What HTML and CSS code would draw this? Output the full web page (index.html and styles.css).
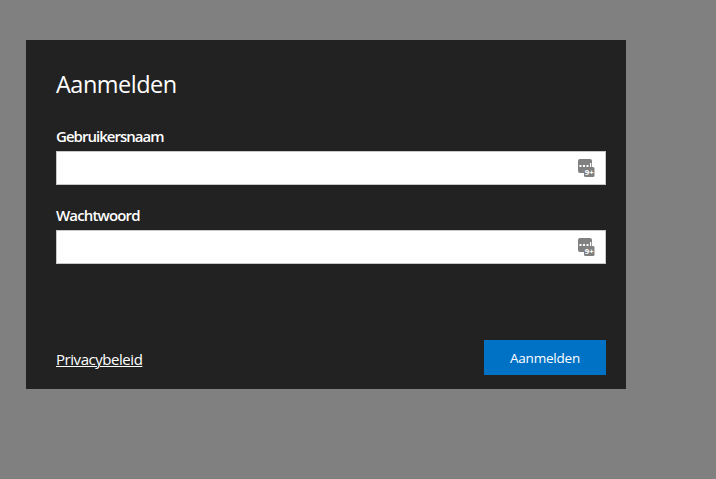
FILE: index.html
```html
<!DOCTYPE html>
<html lang="nl">
<head>
<meta charset="utf-8">
<title>Aanmelden</title>
<link rel="stylesheet" href="styles.css">
</head>
<body>
<main class="card">
  <h1 class="title">Aanmelden</h1>
  <form>
    <label class="label label-user" for="user">Gebruikersnaam</label>
    <div class="field"><input id="user" type="text">
      <svg class="icon" viewBox="0 0 17 19">
        <path fill="#808080" d="M2 0h10q2 0 2 2v12H2q-2 0-2-2V2q0-2 2-2z"/>
        <rect x="6" y="8" width="10.500" height="10" rx="1.500" fill="#808080"/>
        <path fill="#fff" d="M1.500 6h2v2h-2zM5 6h2v2H5zM8.500 6h2v2h-2zM12 4h1.200v4H12z"/>
        <text x="6.700" y="15.500" class="count">9+</text>
      </svg>
    </div>
    <label class="label label-pass" for="pass">Wachtwoord</label>
    <div class="field"><input id="pass" type="password">
      <svg class="icon" viewBox="0 0 17 19">
        <path fill="#808080" d="M2 0h10q2 0 2 2v12H2q-2 0-2-2V2q0-2 2-2z"/>
        <rect x="6" y="8" width="10.500" height="10" rx="1.500" fill="#808080"/>
        <path fill="#fff" d="M1.500 6h2v2h-2zM5 6h2v2H5zM8.500 6h2v2h-2zM12 4h1.200v4H12z"/>
        <text x="6.700" y="15.500" class="count">9+</text>
      </svg>
    </div>
    <div class="footer">
      <a class="privacy" href="#">Privacybeleid</a>
      <button class="submit" type="button">Aanmelden</button>
    </div>
  </form>
</main>
</body>
</html>
```
FILE: styles.css
```css
* { box-sizing: border-box; }
body {
  margin: 0;
  padding: 40px 26px;
  height: 479px;
  overflow: hidden;
  background: #808080;
  color: #fff;
  font-family: "Open Sans", "Noto Sans", sans-serif;
}
.card {
  width: 600px;
  height: 349px;
  padding: 28px 20px 14px 30px;
  background: #222;
}
.title {
  margin: 0;
  height: 32px;
  font-size: 23.5px;
  font-weight: 400;
  line-height: 32px;
  letter-spacing: -0.5px;
}
.label {
  display: block;
  height: 20px;
  font-size: 15px;
  font-weight: 600;
  line-height: 20px;
  letter-spacing: -0.98px;
}
.label-user { margin: 26px 0 5px; }
.label-pass { margin: 20px 0 5px; letter-spacing: -0.85px; }
.field {
  display: flex;
  align-items: center;
  height: 34px;
  padding-right: 10px;
  background: #fff;
  border: 1px solid #c8c8c8;
}
.field input {
  flex: 1;
  height: 32px;
  border: 0;
  outline: 0;
  background: transparent;
}
.icon { width: 17px; height: 19px; }
.count { font: 700 7.800px "Open Sans", sans-serif; fill: #fff; }
.footer {
  display: flex;
  justify-content: space-between;
  align-items: flex-start;
  margin-top: 76px;
}
.privacy {
  margin-top: 9px;
  color: #fff;
  font-size: 15px;
  line-height: 20px;
  letter-spacing: -0.45px;
  text-underline-offset: 1px;
  text-decoration-thickness: 1px;
}
.submit {
  width: 122px;
  height: 35px;
  padding: 1px 0 0;
  border: 0;
  background: #0072c6;
  color: #fff;
  font: 13.500px "Open Sans", "Noto Sans", sans-serif;
  letter-spacing: -0.2px;
}
```
